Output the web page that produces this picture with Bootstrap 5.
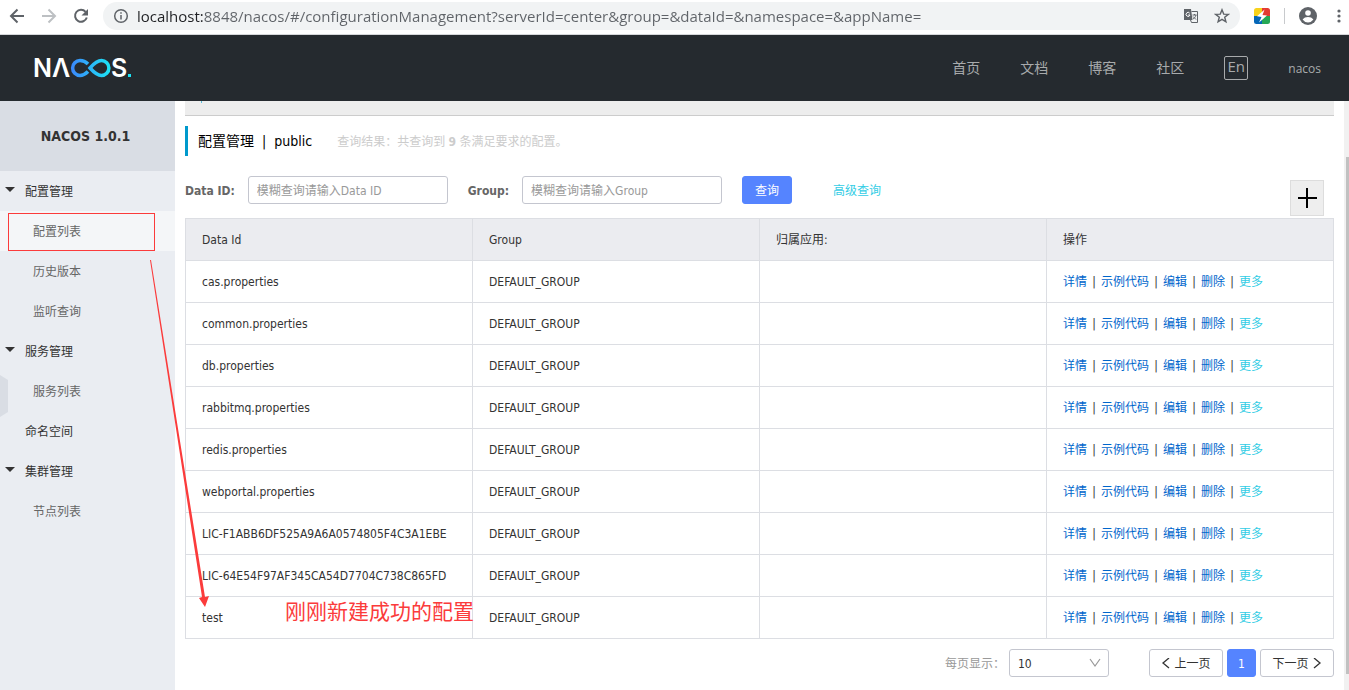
<!DOCTYPE html>
<html lang="zh-CN">
<head>
<meta charset="utf-8">
<meta name="viewport" content="width=device-width, initial-scale=1">
<title>Nacos</title>
<link href="https://cdn.jsdelivr.net/npm/bootstrap@5.3.0/dist/css/bootstrap.min.css" rel="stylesheet">
<style>
:root{--line:#dcdee3;--ink:#333;--blue:#5584ff;--cyan:#33cde5;--edge:#c4c6cf;--note:#fb3b3b}
body{font:12px/18px "DejaVu Sans Condensed","Noto Sans CJK SC",sans-serif;color:var(--ink);min-height:100vh}
a{text-decoration:none}

/* browser bar */
.browser-bar{height:35px;border-bottom:1px solid #d5d7da;padding:2px 7px 4px 8px}
.ico-btn{border:0;background:none;padding:0;display:flex}
.tools{gap:14px}
.address{height:28px;border-radius:14px;background:#f1f3f4;padding:0 10px;gap:15px;margin-left:-1px}
.address input{border:0;outline:0;padding:0;font:15px/20px "Open Sans",sans-serif;min-width:0;margin-left:-7px;color:transparent;background:linear-gradient(90deg,#202124 67px,#5f6368 67px);-webkit-background-clip:text;background-clip:text}
.divide{width:1px;height:16px;background:#c8cacd}
.ico-btn.dots{margin-left:5px}

/* dark navigation */
.top-nav{height:66px;background:#252a2f;padding:0 28px 0 34px}
.top-links{gap:40px;font-size:14px}
.top-links a{color:#a8aaac}
.top-links .user{font:12px/18px "Open Sans",sans-serif;padding-top:2px}
.lang{border:1px solid #a8aaac;border-radius:2px;width:24px;height:24px;font:15px/18px "Open Sans",sans-serif;background:none;color:#a8aaac;padding:0 0 4px}

/* side menu */
.side{width:175px;background:#eaedf2}
.side h1{line-height:70px;background:#d9dde4;font-size:14px;font-weight:700;text-align:center;padding-right:4px;margin:0}
.side a{display:flex;align-items:center;height:40px;color:var(--ink);padding:2px 0 0 25px;position:relative}
.side a.sub{color:#666;padding-left:33px}
.side a.on{background:#f4f6f8}
.side a.parent::before{content:"";position:absolute;left:5px;top:16px;border:5px solid transparent;border-top-color:#333;border-bottom:0}
.handle{position:absolute;left:0;top:274px;width:8px;height:42px;background:#d9dde4;clip-path:polygon(0 0,100% 12%,100% 88%,0 100%)}

/* main pane */
.main-pane{padding:0 15px 13px 10px;min-width:0}
.strip{height:15px;background:#ededed;border-bottom:1px solid #ccc;padding-left:16px}
.strip i{display:block;width:1px;height:2px;background:#5bbcd8}
.page-title{height:30px;border-left:3px solid #09c;padding-left:10px;margin:10px 0 20px;color:#000}
.page-title h2{font-size:14px;line-height:20px;gap:8px;margin:0}
.page-title p{color:#ccc;margin:0 0 0 25px;padding-top:2px}
.filters{height:42px}
.filters label{font-weight:700;color:#666;margin-right:13px;padding-top:2px}
.field{height:28px;width:200px;border:1px solid var(--edge);border-radius:3px;padding:2px 8px 0;margin-right:20px;color:var(--ink)}
.field::placeholder{color:#999;opacity:1}
.btn-n{height:28px;border:1px solid var(--edge);border-radius:3px;background:#fff;color:var(--ink);font-size:12px;line-height:18px;padding:2px 10px 0;display:flex;align-items:center;justify-content:center;gap:4px}
.btn-n.solid{background:var(--blue);border-color:var(--blue);color:#fff}
.btn-n.query{width:50px;margin-right:41px}
.cyan{padding-top:2px}
.add-btn{width:34px;height:36px;border:1px solid #ddd;background:#eee;padding:0;margin:4px 10px 0 0}
.grid-table{table-layout:fixed;width:100%;border-collapse:collapse}
.grid-table th,.grid-table td{border:1px solid var(--line);height:42px;padding:0 16px;font-weight:400;white-space:nowrap}
.grid-table th{background:#ebecf0}
.grid-table a{color:#06c}
.grid-table a.more,.cyan{color:var(--cyan)}
.sep{display:inline-block;width:14px;text-align:center}
.pager{margin-top:10px;gap:4px}
.pager label{color:#999;padding-top:2px}
.size-box{position:relative;margin-right:36px}
.size-box select{display:block;width:100px;height:28px;border:1px solid var(--edge);border-radius:3px;appearance:none;background:#fff;padding:2px 8px 0;color:var(--ink)}
.size-box svg{position:absolute;right:8px;top:8px;pointer-events:none}
.btn-n.step{width:74px}
.btn-n.num{width:29px}
.scroll-track{width:5px;right:0;top:0;bottom:0;background:#f1f1f1;position:absolute}
.scroll-track i{position:absolute;left:2px;right:0;top:56px;bottom:16px;background:#c1c1c1}

/* annotations over the page */
.note-box{position:absolute;left:8px;top:112px;width:147px;height:38px;border:1px solid var(--note);pointer-events:none}
.note-arrow{position:absolute;left:149px;top:158px;pointer-events:none}
.note-text{position:absolute;left:285px;top:497px;font-size:21px;line-height:28px;color:var(--note);margin:0}
</style>
</head>
<body class="d-flex flex-column">
<header class="browser-bar d-flex align-items-center tools">
  <button class="ico-btn" aria-label="后退"><svg width="18" height="18" fill="none" stroke="#5f6368" stroke-width="2"><path d="M16 9H3.500M9.500 2.500L3 9l6.500 6.500"/></svg></button>
  <button class="ico-btn" aria-label="前进"><svg width="18" height="18" fill="none" stroke="#bdc0c3" stroke-width="2"><path d="M2 9h12.500M8.500 2.500L15 9l-6.500 6.500"/></svg></button>
  <button class="ico-btn" aria-label="刷新"><svg width="18" height="18" fill="none" stroke="#5f6368" stroke-width="2"><path d="M13.600 4.800A6 6 0 1 0 14.800 10.500"/><path d="M16 2v6.500H9.500z" fill="#5f6368" stroke="none"/></svg></button>
  <div class="address d-flex align-items-center flex-grow-1">
    <svg class="flex-shrink-0" width="16" height="16" fill="none" stroke="#5f6368" stroke-width="1.500"><circle cx="8" cy="8" r="6.300"/><path d="M8 7v4.500M8 4.200v1.600"/></svg>
    <input class="flex-grow-1" aria-label="地址" value="localhost:8848/nacos/#/configurationManagement?serverId=center&amp;group=&amp;dataId=&amp;namespace=&amp;appName=">
    <button class="ico-btn" aria-label="翻译"><svg width="16" height="16" fill="none" stroke="#5f6368"><path d="M1 1h7l1.500 11H1z" fill="#5f6368" stroke="none"/><path d="M8.500 3.500H14.500v11H8.500l-1-2.500"/><path d="M6.700 5.200A2 2 0 1 0 7 7H5.200" stroke="#fff"/><path d="M9.500 7h4M11.500 6v1M13 7c-.5 2-2 3.500-3 4M10 8.500l3 3"/></svg></button>
    <button class="ico-btn" aria-label="收藏"><svg width="16" height="16" fill="none" stroke="#5f6368" stroke-width="1.400"><path d="M8 1.800l1.700 4.300 4.600.3-3.600 2.900 1.200 4.500L8 11.300l-3.900 2.500 1.200-4.500L1.700 6.400l4.600-.3z"/></svg></button>
  </div>
  <button class="ico-btn" aria-label="扩展"><svg width="16" height="16"><clipPath id="rc"><rect width="16" height="16" rx="2.500"/></clipPath><g clip-path="url(#rc)"><path d="M0 0h8v8H0z" fill="#f8d21c"/><path d="M8 0h8v8H8z" fill="#e43b32"/><path d="M0 8h8v8H0z" fill="#0567b8"/><path d="M8 8h8v8H8z" fill="#27a856"/></g><path d="M10.500 1.500L3 8.300l4.500.7-2.500 5.500L13 7.500 8.500 7z" fill="#fff"/></svg></button>
  <span class="divide"></span>
  <button class="ico-btn" aria-label="用户"><svg width="18" height="18"><circle cx="9" cy="9" r="9" fill="#5f6368"/><circle cx="9" cy="6" r="2.800" fill="#fff"/><path d="M3.600 12.600c1.300-2 3.200-2.700 5.400-2.700s4.100.7 5.400 2.700A6.600 6.600 0 0 1 9 15.500a6.600 6.600 0 0 1-5.400-2.900z" fill="#fff"/></svg></button>
  <button class="ico-btn dots" aria-label="菜单"><svg width="6" height="16" fill="#5f6368"><circle cx="3" cy="3" r="1.600"/><circle cx="3" cy="8" r="1.600"/><circle cx="3" cy="13" r="1.600"/></svg></button>
</header>

<nav class="top-nav d-flex align-items-center justify-content-between">
  <a href="#" aria-label="Nacos">
    <svg class="d-block" width="100" height="40" viewBox="0 -9 100 40" font-family="Inter,sans-serif" font-size="25" font-weight="600" fill="#fff">
      <defs><linearGradient id="lg" gradientUnits="userSpaceOnUse" x1="37" x2="76" y1="0" y2="0"><stop stop-color="#3b87fb"/><stop offset="1" stop-color="#1ce4f5"/></linearGradient></defs>
      <text x="-1" y="20">N</text><text x="18" y="20">Λ</text><text x="77" y="20">S</text>
      <g fill="none" stroke="url(#lg)" stroke-width="3.500"><path d="M54 7C51.500 4.500 49 3.600 46 3.600a7.400 7.400 0 0 0 0 14.800c3 0 5.500-1.400 8-3.900"/><path d="M56 11c4-4.500 7-7.400 11.500-7.400a7.400 7.400 0 0 1 0 14.800C63 18.400 60 15.500 56 11z"/></g>
      <path d="M94 17h3v3h-3z" fill="#1ce4f5"/>
    </svg>
  </a>
  <div class="top-links d-flex align-items-center">
    <a href="#">首页</a><a href="#">文档</a><a href="#">博客</a><a href="#">社区</a>
    <button class="lang">En</button>
    <a class="user" href="#">nacos</a>
  </div>
</nav>

<div class="d-flex flex-grow-1 position-relative">
  <aside class="side flex-shrink-0">
    <h1>NACOS 1.0.1</h1>
    <nav>
      <a class="parent" href="#">配置管理</a>
      <a class="sub on" href="#">配置列表</a>
      <a class="sub" href="#">历史版本</a>
      <a class="sub" href="#">监听查询</a>
      <a class="parent" href="#">服务管理</a>
      <a class="sub" href="#">服务列表</a>
      <a href="#">命名空间</a>
      <a class="parent" href="#">集群管理</a>
      <a class="sub" href="#">节点列表</a>
    </nav>
    <span class="handle"></span>
  </aside>

  <main class="main-pane flex-grow-1">
    <div class="strip"><i></i></div>
    <div class="page-title d-flex align-items-center">
      <h2 class="d-flex fw-normal"><span>配置管理</span><span>|</span><span>public</span></h2>
      <p>查询结果：共查询到 <b>9</b> 条满足要求的配置。</p>
    </div>
    <form class="filters d-flex align-items-start">
      <div class="d-flex align-items-center flex-grow-1">
        <label for="dataId">Data ID:</label><input id="dataId" class="field" placeholder="模糊查询请输入Data ID">
        <label for="group">Group:</label><input id="group" class="field" placeholder="模糊查询请输入Group">
        <button type="button" class="btn-n solid query">查询</button>
        <a class="cyan" href="#">高级查询</a>
      </div>
      <button type="button" class="add-btn d-flex align-items-center justify-content-center" aria-label="新建"><svg width="20" height="20" stroke="#000" stroke-width="2"><path d="M1 10h19M10 0v20"/></svg></button>
    </form>
    <table class="grid-table">
      <thead><tr><th>Data Id</th><th>Group</th><th>归属应用:</th><th>操作</th></tr></thead>
      <tbody id="rows"></tbody>
    </table>
    <div class="pager d-flex align-items-center justify-content-end">
      <label for="size">每页显示：</label>
      <div class="size-box">
        <select id="size"><option>10</option><option>20</option><option>30</option></select>
        <svg width="12" height="12" fill="none" stroke="#999" stroke-width="1.200"><path d="M1 2l5 7 5-7"/></svg>
      </div>
      <button class="btn-n step"><svg width="9" height="12" fill="none" stroke="#333" stroke-width="1.300"><path d="M8 0L2 5l6 5"/></svg>上一页</button>
      <button class="btn-n solid num">1</button>
      <button class="btn-n step">下一页<svg width="9" height="12" fill="none" stroke="#333" stroke-width="1.300"><path d="M1 0l6 5-6 5"/></svg></button>
    </div>
  </main>
  <div class="scroll-track"><i></i></div>

  <div class="note-box"></div>
  <svg class="note-arrow" width="64" height="350"><path d="M1 1h1l54 337 4-1-4 11-6-9 3-1z" fill="#fb3b3b"/></svg>
  <p class="note-text">刚刚新建成功的配置</p>
</div>

<script>
const ids = ['cas.properties','common.properties','db.properties','rabbitmq.properties','redis.properties','webportal.properties','LIC-F1ABB6DF525A9A6A0574805F4C3A1EBE','LIC-64E54F97AF345CA54D7704C738C865FD','test'];
const actions = ['详情','示例代码','编辑','删除'].map(t => `<a href="#">${t}</a>`).concat('<a class="more" href="#">更多</a>').join('<span class="sep">|</span>');
document.getElementById('rows').innerHTML = ids.map(id => `<tr><td>${id}</td><td>DEFAULT_GROUP</td><td></td><td>${actions}</td></tr>`).join('');
</script>
<script src="https://cdn.jsdelivr.net/npm/bootstrap@5.3.0/dist/js/bootstrap.bundle.min.js"></script>
</body>
</html>
